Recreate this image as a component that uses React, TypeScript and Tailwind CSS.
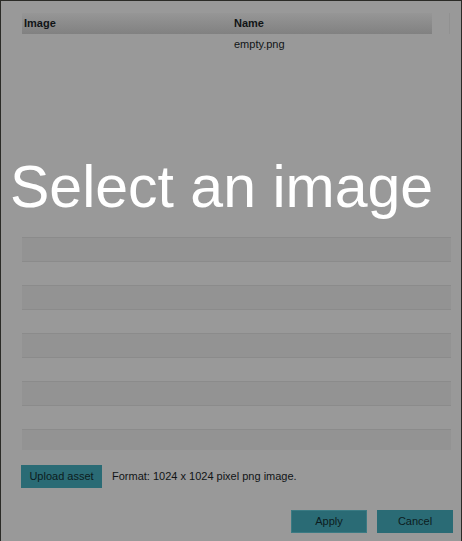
import React from 'react';

const rows = [0, 1, 2, 3, 4];

const App: React.FC = () => {
  return (
    <div className="relative w-[462px] h-[541px] bg-[#999999] border-l border-t border-r border-[#2b2b27] font-[family-name:'Liberation_Sans',Arial,sans-serif] text-[11px] text-[#111416] overflow-hidden">
      <div className="pt-[12px] pl-[21px] pr-[10px]">
        <div className="relative h-[437px] overflow-hidden">
          <div className="flex w-[410px] h-[21px] items-center font-bold bg-gradient-to-b from-[#969696] to-[#818181]">
            <div className="w-[212px] pl-[2px]">Image</div>
            <div>Name</div>
          </div>
          <div className="absolute right-[1px] top-[-5px] h-[26px] w-px bg-[#919191]" />
          <div className="flex h-[203px]">
            <div className="w-[212px]" />
            <div className="pt-[3px] leading-[14px]">empty.png</div>
          </div>
          <div className="flex flex-col gap-[23px]">
            {rows.map((r) => (
              <div key={r} className="h-[25px] bg-[#939393] border-y border-[#8b8b8b]" />
            ))}
          </div>
        </div>
      </div>

      <div className="flex items-center gap-[10px] pl-[20px] mt-[15px]">
        <button className="w-[81px] h-[23px] bg-[#2a6b75] text-[#0c1c20]">Upload asset</button>
        <span>Format: 1024 x 1024 pixel png image.</span>
      </div>

      <div className="flex justify-end gap-[10px] pr-[8px] mt-[22px]">
        <button className="w-[76px] h-[23px] bg-[#2a6b75] border border-[#3a7a83] text-[#0c1c20]">Apply</button>
        <button className="w-[76px] h-[23px] bg-[#2a6b75] text-[#0c1c20]">Cancel</button>
      </div>

      <div className="absolute left-[9px] top-[157px] text-[59px] leading-none text-white whitespace-nowrap">
        Select an image
      </div>
    </div>
  );
};

export default App;
